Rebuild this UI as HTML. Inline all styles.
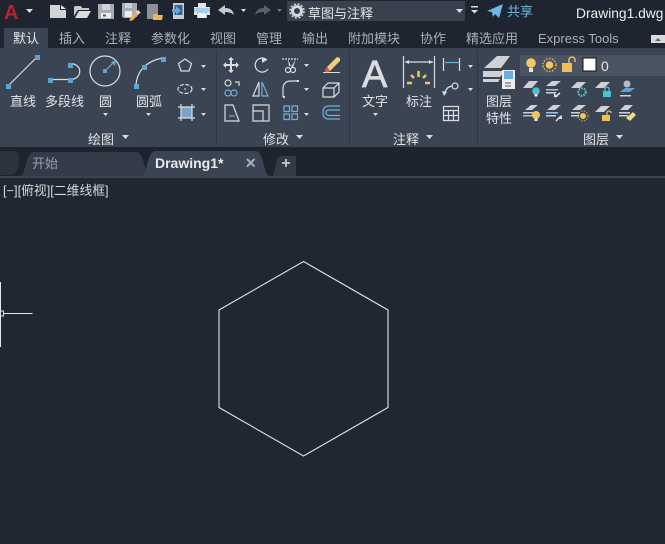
<!DOCTYPE html>
<html><head><meta charset="utf-8">
<style>
html,body{margin:0;padding:0;background:#212731;width:665px;height:544px;overflow:hidden}
svg{display:block}
text{font-family:"Liberation Sans","Noto Sans CJK SC",sans-serif;fill:#d5d8dc;font-size:12px}
.t{fill:#aab0b8;font-size:13px}
.l{fill:#e2e4e7;font-size:13px}
.s{stroke:#d9dde2;stroke-width:1.2;fill:none}
.b{stroke:#6fb0dc;stroke-width:1.2;fill:none}
.g{fill:#cfd1d4}
.d{fill:#5fa3d3}
.a{fill:#d9dde2}
.w{stroke:#e4e6e9;stroke-width:1.5;fill:none}
</style></head><body>
<svg width="665" height="544" viewBox="0 0 665 544" xmlns="http://www.w3.org/2000/svg">
<rect width="665" height="544" fill="#212731"/>
<rect width="665" height="48" fill="#1f2530"/>
<!-- QAT -->
<text x="4" y="19" style="font-size:20px;font-weight:bold;fill:#b8232c">A</text>
<path class="a" d="M26 9h7l-3.500 4z"/>
<path fill="#d2d3d4" d="M50 5h10v5h6v8H50z"/><path fill="#e8e8e8" d="M61 5l5 4h-5z"/>
<path fill="#c6c8ca" d="M74 16V7l1-1h6l1 2h7v2H78z"/><path fill="#dcdcdc" d="M79 11h12l-4 7H75z"/>
<rect x="98" y="4" width="16" height="15" fill="#a9acb1"/><rect x="102" y="4" width="8" height="6" fill="#d0d2d5"/><rect x="101" y="13" width="10" height="5" fill="#eceded"/><rect x="103" y="14.500" width="3" height="2" fill="#555"/>
<rect x="122" y="3" width="15" height="14" fill="#a9acb1"/><rect x="125" y="3" width="7" height="5" fill="#d0d2d5"/><rect x="125" y="11" width="7" height="6" fill="#eceded"/><rect x="123" y="17" width="9" height="1" fill="#a9acb1"/>
<path fill="#e6b05c" d="M130 18l8-8 2.500 2.500-8 8-3 .5z"/><path fill="#e8dcc0" d="M136 12l2-2 2.500 2.500-2 2z"/>
<rect x="147" y="4" width="11" height="15" fill="#8d9094"/><path fill="#e8b858" d="M153 14h4l1 1h5l-1 5h-9z"/>
<rect x="173" y="3" width="11" height="16" fill="#c9ccd0"/><rect x="174.500" y="5" width="8" height="10" fill="#3f5f7f"/><path fill="#5aace6" d="M172 9h4V6l5 4.500-5 4.500v-3h-4z"/>
<path fill="#e2e4e6" d="M198 3h8v4h4v5h-16V7h4z"/><rect x="194" y="8" width="16" height="5" fill="#a9cfe8"/><rect x="194" y="12" width="16" height="3" fill="#dfe1e3"/><rect x="197" y="12" width="10" height="6" fill="#a9cfe8"/><rect x="198" y="13" width="8" height="5" fill="#f0f1f2"/>
<path fill="#c6c9cd" d="M218 10l7-5v3c5 0 8 2 9 7-2-2-5-3-9-3v3z"/>
<path class="a" d="M241 9h5l-2.500 3z"/>
<path fill="#5b616a" d="M271 10l-7-5v3c-5 0-8 2-9 7 2-2 5-3 9-3v3z"/>
<path fill="#777" d="M277 9h5l-2.500 3z"/>
<rect x="287" y="1" width="178" height="20" fill="#39414e"/>
<circle cx="297" cy="11" r="4.500" fill="none" stroke="#d5d8dc" stroke-width="3"/><circle cx="297" cy="11" r="7" fill="none" stroke="#d5d8dc" stroke-width="1.500" stroke-dasharray="2 1.700"/>
<text x="308" y="18" style="font-size:13px;fill:#e3e5e8">草图与注释</text>
<path class="a" d="M456 9h7l-3.500 4z"/>
<path class="a" d="M471 6h7v1.500h-7zM471 10h7l-3.500 3.500z"/>
<path fill="#6fb5e2" d="M487 11l16-7-4 14-4-4-2 3-1-5z"/>
<text x="507" y="16" style="font-size:13px;fill:#6fb5e2">共享</text>
<text x="576" y="18" style="font-size:13.800px;fill:#eceef0">Drawing1.dwg</text>
<!-- ribbon tabs -->
<rect x="4" y="28" width="44" height="20" fill="#3b4453"/>
<text x="13" y="43" style="font-size:13px;fill:#e5e7ea">默认</text>
<text class="t" x="59" y="43">插入</text>
<text class="t" x="105" y="43">注释</text>
<text class="t" x="151" y="43">参数化</text>
<text class="t" x="210" y="43">视图</text>
<text class="t" x="256" y="43">管理</text>
<text class="t" x="302" y="43">输出</text>
<text class="t" x="348" y="43">附加模块</text>
<text class="t" x="420" y="43">协作</text>
<text class="t" x="466" y="43">精选应用</text>
<text class="t" x="538" y="43">Express Tools</text>
<rect x="651" y="35" width="14" height="8" fill="#d8dadc"/><path fill="#666" d="M655 41h6l-3-3z"/>
<!-- ribbon -->
<rect y="48" width="665" height="99" fill="#3b4453"/>
<rect y="147" width="665" height="4" fill="#1e242d"/>
<path stroke="#2e3540" d="M216.500 50v95M349.500 50v95M477.500 50v95" fill="none"/>
<!-- draw panel -->
<path class="s" d="M9 85L37 57"/><rect x="6" y="84" width="5" height="5" class="d"/><rect x="35" y="55" width="5" height="5" class="d"/>
<path class="s" d="M50 79.500h20M70 79.500c13 0 13-16 0-16"/><rect x="48" y="78" width="5" height="5" class="d"/><rect x="68" y="78" width="5" height="5" class="d"/><rect x="68" y="63" width="5" height="5" class="d"/>
<circle class="s" cx="105" cy="71" r="15"/><path class="b" d="M105 71l9-9"/><rect x="103" y="69" width="4" height="4" class="d"/><path class="d" d="M116 60l-1 6-4-4z"/>
<path class="s" d="M136 85c1-14 10-24 27-27"/><rect x="134" y="84" width="5" height="5" class="d"/><rect x="142" y="65" width="5" height="5" class="d"/><rect x="161" y="57" width="5" height="5" class="d"/>
<text class="l" x="10" y="106">直线</text>
<text class="l" x="45" y="106">多段线</text>
<text class="l" x="99" y="106">圆</text>
<text class="l" x="136" y="106">圆弧</text>
<path class="a" d="M103 113h5l-2.500 3zM146 113h5l-2.500 3z"/>
<path class="s" d="M185 59l6.500 4.500-2.500 7.500h-8l-2.500-7.500z"/>
<path class="a" d="M201 65h5l-2.500 3zM201 88h5l-2.500 3zM201 113h5l-2.500 3z"/>
<ellipse class="s" cx="185" cy="89" rx="7" ry="4.500" stroke-dasharray="4 1.500"/><rect x="184" y="88" width="2" height="2" class="d"/>
<rect x="181" y="107" width="11" height="11" fill="#7ba3c8"/><path class="s" d="M178 107h17M178 118h17M181 104v17M192 104v17"/>
<text class="l" x="88" y="144">绘图</text>
<path class="a" d="M122 135h7l-3.500 4z"/>
<!-- modify -->
<path class="a" d="M231 57l3 3h-2v4h4v-2l3 3-3 3v-2h-4v4h2l-3 3-3-3h2v-4h-4v2l-3-3 3-3v2h4v-4h-2z"/>
<path class="s" d="M267 60a7 7 0 1 0 1 9"/><path class="a" d="M262 57l5 3-5 3z"/>
<path class="s" d="M282 59h16" stroke-dasharray="2 1"/><path class="a" d="M288 59l3 7h-2zM296 59l-3 8h-2z"/><circle class="s" cx="288" cy="70" r="2.500"/><circle class="s" cx="293" cy="70" r="2.500"/>
<path class="a" d="M304 64h5l-2.500 3zM304 88h5l-2.500 3zM304 113h5l-2.500 3z"/>
<path fill="#f0cf7a" d="M327 67l10-10 3 1v3l-10 10z"/><path fill="#d8605f" d="M326 67l4 4-2 1h-3z"/><path d="M323 72.500h17" stroke="#d9dde2"/>
<circle class="s" cx="228" cy="83" r="3"/><path class="s" d="M235 82h4v4"/><circle class="b" cx="228" cy="93" r="3"/><circle class="b" cx="234" cy="93" r="3"/>
<path class="s" d="M259 82l-6 14h6z"/><path class="b" d="M262 82l6 14h-6z"/>
<path class="s" d="M283 97v-8q0-8 8-8h7"/><path class="a" d="M283 96h2v2h-2zM297 80h2v2h-2z"/>
<path class="s" d="M323 88l5-5h11v9l-5 5h-11zM323 88h11v9M334 88l5-5"/>
<path class="s" d="M225 105h8l6 16h-14z"/><path class="b" d="M229 116h6"/>
<path class="s" d="M253 105h16v16h-16zM253 111h10v10"/>
<path class="b" d="M284 106h5.500v5.500h-5.500zM292 106h5.500v5.500h-5.500zM284 114h5.500v5.500h-5.500zM292 114h5.500v5.500h-5.500z"/>
<path class="b" d="M340 106h-11q-6 0-6 6.500t6 6.500h11M340 110h-11q-3 0-3 2.500t3 3h11"/>
<text class="l" x="263" y="144">修改</text>
<path class="a" d="M296 135h7l-3.500 4z"/>
<!-- annotate -->
<text x="362" y="87" style="font-size:38px;fill:#dcdde0;stroke:#dcdde0;stroke-width:.7">A</text>
<text class="l" x="362" y="106">文字</text>
<path class="a" d="M373 113h5l-2.500 3z"/>
<path class="s" d="M403.500 56v32M434.500 56v32M405 62h28"/>
<path class="a" d="M405 62l4-2v4zM433 62l-4-2v4z"/>
<path stroke="#ecc94f" stroke-width="2.500" d="M418.500 71v6M411 75l3 3M426 75l-3 3M407 83h5M430 83h-5" fill="none"/>
<text class="l" x="406" y="106">标注</text>
<path class="s" d="M443.500 58v13M459.500 58v13"/><path class="b" d="M445 62.500h14"/>
<path class="a" d="M468 65h5l-2.500 3zM468 88h5l-2.500 3z"/>
<circle class="s" cx="455" cy="86" r="3"/><path class="s" d="M452 86q-6 1-7 7"/><path class="a" d="M442 91l5 1-3 4z"/>
<path class="s" d="M443.500 106.500h15v14h-15zM443.500 110.500h15M443.500 115.500h15M448.500 110.500v10M453.500 110.500v10"/>
<text class="l" x="393" y="144">注释</text>
<path class="a" d="M426 135h7l-3.500 4z"/>
<!-- layers -->
<path class="g" d="M484 68l13-12h13l-9 12z"/><path class="g" d="M483 71h22l-5 6h-17zM483 79h17l-2 3h-15z"/>
<rect x="502" y="70" width="13" height="19" fill="#eceef0"/><rect x="504" y="71" width="9" height="8" fill="#6aaee6"/><path stroke="#555" d="M505 83h6M505 86h6" fill="none"/>
<text class="l" x="486" y="106">图层</text>
<text class="l" x="486" y="123">特性</text>
<rect x="520" y="55" width="145" height="21" fill="#4b5462"/>
<circle cx="531" cy="63" r="4.800" fill="#f4c862"/><rect x="529" y="68" width="4" height="4" fill="#e2e2e2"/>
<circle cx="549.500" cy="65" r="3.800" fill="#f1c45c"/><circle cx="549.500" cy="65" r="6.500" fill="none" stroke="#e0b85a" stroke-dasharray="1.500 1.500" stroke-width="1.500"/>
<rect x="562" y="63" width="10" height="9" fill="#f0bd58"/><path d="M569 63v-3a3 3 0 0 1 6 0v2" fill="none" stroke="#f0bd58" stroke-width="1.500"/>
<rect x="583" y="58" width="13" height="13" fill="#fff" stroke="#111"/>
<text x="601" y="71" style="font-size:14px;fill:#e2e4e7">0</text>
<!-- layer row 1 -->
<path class="g" d="M523 88l6-7h9l-6 7z"/><circle cx="536" cy="91" r="3.800" fill="#49c3cf"/><rect x="534.500" y="94" width="3" height="2.500" fill="#eee"/>
<path class="g" d="M546 86l6-5h9l-6 5z"/><path fill="#9dc3df" d="M546 89h12v1.500h-12z"/><path class="g" d="M546 92h10v1.500h-10z"/><path class="w" d="M555 97l5-4"/><path class="a" d="M554 93v4h4z"/>
<path class="g" d="M571 88l6-6h9l-6 6z"/><circle cx="582" cy="92" r="3.800" fill="none" stroke="#49c3cf" stroke-width="2" stroke-dasharray="1.800 1"/>
<path class="g" d="M595 88l6-6h9l-6 6z"/><rect x="603" y="91" width="8" height="6" fill="#49c3cf"/><path d="M605 91v-2a2 2 0 0 1 4 0v2" fill="none" stroke="#49c3cf" stroke-width="1.300"/>
<circle cx="627" cy="84" r="3.500" fill="#b8bcc2"/><path class="d" d="M620 92l5-4h10l-5 4z"/><path class="g" d="M620 95h11v1.500h-11z"/>
<!-- layer row 2 -->
<path class="g" d="M525 110l6-5h7l-6 5z"/><path class="g" d="M523 112h11v1.500h-11z"/><path fill="#9dc3df" d="M523 115h10v1.500h-10z"/><circle cx="536" cy="115" r="4" fill="#f2c45a"/><rect x="534.500" y="118.500" width="3" height="2.500" fill="#eee"/>
<path class="g" d="M547 110l6-5h8l-6 5z"/><path fill="#9dc3df" d="M546 112h12v1.500h-12z"/><path class="g" d="M546 115h10v1.500h-10z"/><path class="w" d="M556 121l5-5"/><path class="a" d="M562 115v4h-4z"/>
<path class="g" d="M572 110l6-5h8l-6 5z"/><path class="g" d="M571 112h9v1.500h-9zM571 115h8v1.500h-8z"/><circle cx="583" cy="116" r="3" fill="#f0c85a"/><circle cx="583" cy="116" r="5" fill="none" stroke="#e0b85a" stroke-dasharray="1.200 1.500"/>
<path class="g" d="M595 112l6-6h9l-6 6z"/><rect x="602" y="115" width="8" height="6" fill="#f0bd58"/><path d="M607 115v-2a2 2 0 0 1 4 0" fill="none" stroke="#f0bd58" stroke-width="1.300"/>
<path class="g" d="M620 110l5-5h8l-5 5z"/><path class="g" d="M619 112h11v1.500h-11zM619 115h9v1.500h-9z"/><path d="M626 118l7-6 3 3-6 6z" fill="#f0d888"/>
<text class="l" x="583" y="144">图层</text>
<path class="a" d="M616 135h7l-3.500 4z"/>
<!-- doc tabs -->
<rect y="151" width="665" height="25" fill="#1e242d"/>
<path fill="#2d3440" d="M0 151h12c6 0 7 4 7 10s-3 14-9 14H0z"/>
<path fill="#343b48" d="M20 176c6 0 5-24 14-24h102c9 0 8 24 14 24z"/>
<path fill="#3b4453" d="M141 176c7 0 5-25 15-25h99c10 0 8 25 15 25z"/>
<text x="32" y="168" style="font-size:13px;fill:#9aa0a8">开始</text>
<text x="155" y="168" style="font-size:14px;font-weight:bold;fill:#e8eaed">Drawing1*</text>
<path stroke="#aab0b8" stroke-width="2" d="M247 159l7.500 7.500M254.500 159l-7.500 7.500" fill="none"/>
<path fill="#333b47" d="M272 176c4 0 2-20 10-20h14v20z"/>
<path stroke="#b8bcc2" stroke-width="2" d="M286 159v8M282 163h8" fill="none"/>
<rect y="176" width="665" height="2" fill="#3b4453"/>
<!-- canvas -->
<text x="3" y="195" style="font-size:12.800px;fill:#d5d8dc">[−][俯视][二维线框]</text>
<path d="M.5 282v65" stroke="#e5e7ea" fill="none"/>
<rect x="-1" y="311" width="4.500" height="5" fill="none" stroke="#e5e7ea"/>
<path d="M3.500 313.500h29" stroke="#e5e7ea" fill="none"/>
<polygon points="303.500,261.500 388,310 388,407.500 303.500,456 219,407.500 219,310" fill="none" stroke="#dfe2e5" stroke-width="1.100"/>
</svg>
</body></html>
